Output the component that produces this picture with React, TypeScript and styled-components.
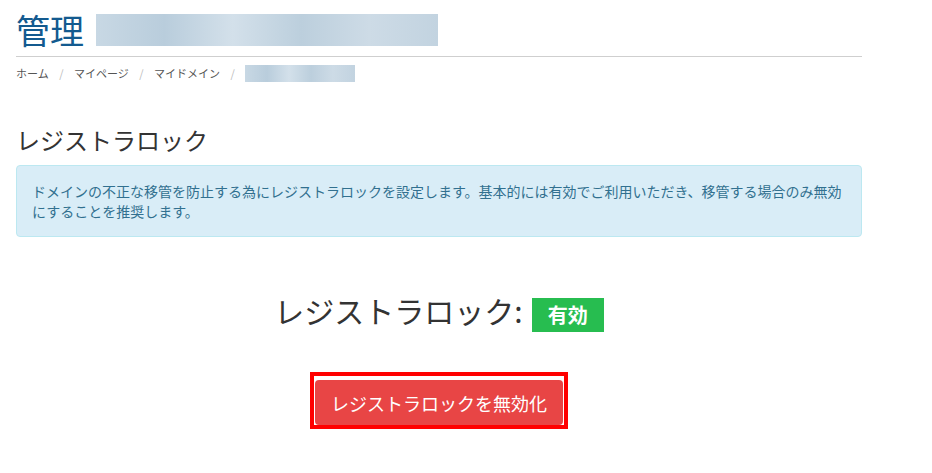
import React from "react";
import styled, { createGlobalStyle } from "styled-components";

const GlobalStyle = createGlobalStyle`
  body {
    margin: 0;
    background: #fff;
    font-family: "Noto Sans CJK JP", "Noto Sans", sans-serif;
    color: #333;
  }
`;

const Page = styled.div`
  width: 846px;
  margin-left: 16px;
`;

const TitleRow = styled.h1`
  display: flex;
  align-items: center;
  gap: 12px;
  margin: 0;
  padding: 10px 0 6px;
  border-bottom: 1px solid #cfcfcf;
  font-size: 34px;
  font-weight: 400;
  line-height: 40px;
  color: #135a8f;
`;

const Blur = styled.span<{ w: number; h: number }>`
  display: inline-block;
  width: ${(p) => p.w}px;
  height: ${(p) => p.h}px;
  background: linear-gradient(
    90deg,
    #c8d8e4 0%,
    #b9cddc 20%,
    #d3e0ea 40%,
    #bccfdd 60%,
    #cddbe6 80%,
    #c2d3e0 100%
  );
  filter: blur(0.5px);
`;

const Crumbs = styled.nav`
  display: flex;
  align-items: center;
  height: 32px;
  font-size: 11px;
  color: #555;
`;

const Sep = styled.span`
  color: #bbb;
  margin: 0 10.5px;
`;

const SectionTitle = styled.h2`
  margin: 36px 0 10px;
  font-size: 24px;
  font-weight: 400;
  line-height: 30px;
  color: #333;
`;

const Alert = styled.div`
  padding: 15px;
  background: #d9edf7;
  border: 1px solid #bce8f1;
  border-radius: 4px;
  color: #31708f;
  font-size: 14px;
  line-height: 20px;
`;

const Status = styled.div`
  display: flex;
  justify-content: center;
  align-items: center;
  margin-top: 51px;
  font-size: 30px;
  line-height: 36px;
  color: #333;
`;

const Badge = styled.span`
  display: inline-flex;
  align-items: center;
  justify-content: center;
  width: 72px;
  height: 34px;
  margin-left: 9px;
  margin-top: 10px;
  background: #27bd50;
  color: #fff;
  font-size: 20px;
  font-weight: 700;
`;

const Actions = styled.div`
  display: flex;
  justify-content: center;
  margin-top: 40px;
`;

const Highlight = styled.div`
  border: 4px solid #ff0000;
  padding: 4px 1px 0 1px;
`;

const DangerButton = styled.button`
  display: block;
  width: 248px;
  height: 45px;
  border: none;
  border-radius: 4px;
  background: #e84545;
  color: #fff;
  font-family: inherit;
  font-size: 18px;
  cursor: pointer;
`;

export default function App() {
  return (
    <Page>
      <GlobalStyle />
      <TitleRow>
        管理
        <Blur w={342} h={32} />
      </TitleRow>
      <Crumbs>
        <span>ホーム</span>
        <Sep>/</Sep>
        <span>マイページ</span>
        <Sep>/</Sep>
        <span>マイドメイン</span>
        <Sep>/</Sep>
        <Blur w={110} h={17} />
      </Crumbs>
      <SectionTitle>レジストラロック</SectionTitle>
      <Alert>
        ドメインの不正な移管を防止する為にレジストラロックを設定します。基本的には有効でご利用いただき、移管する場合のみ無効にすることを推奨します。
      </Alert>
      <Status>
        レジストラロック:
        <Badge>有効</Badge>
      </Status>
      <Actions>
        <Highlight>
          <DangerButton>レジストラロックを無効化</DangerButton>
        </Highlight>
      </Actions>
    </Page>
  );
}
